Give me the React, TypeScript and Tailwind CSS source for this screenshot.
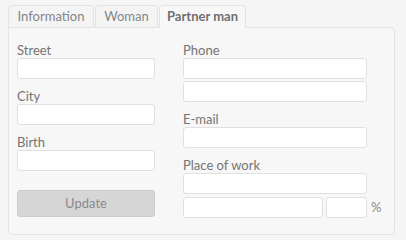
import React from "react";

const inputCls =
  "block h-[21px] w-full rounded-[3px] border border-[#e0e0e0] bg-white";

function Field({ label, className = "" }: { label: string; className?: string }) {
  return (
    <div className={className}>
      <div className="h-[16px] text-[13px] leading-[16px] text-[#747474]">{label}</div>
      <div className={inputCls} />
    </div>
  );
}

export default function App() {
  return (
    <div
      className="h-[240px] w-[406px] bg-[#f5f5f5] pl-[8px] pt-[5px]"
      style={{ fontFamily: "Lato, 'Open Sans', sans-serif" }}
    >
      <div className="flex h-[22px] gap-[1px]">
        <div className="flex w-[86px] items-center justify-center rounded-t-[4px] border border-b-0 border-[#e3e3e3] bg-[#f4f4f4] text-[13px] text-[#858585]">
          Information
        </div>
        <div className="flex w-[63px] items-center justify-center rounded-t-[4px] border border-b-0 border-[#e3e3e3] bg-[#f4f4f4] text-[13px] text-[#858585]">
          Woman
        </div>
        <div className="relative z-10 flex h-[23px] w-[87px] items-center justify-center rounded-t-[4px] border border-b-0 border-[#e3e3e3] bg-[#f7f7f7] text-[13px] font-bold text-[#707070]">
          Partner man
        </div>
      </div>
      <div className="flex h-[208px] w-[387px] gap-[28px] rounded-b-[4px] rounded-tr-[4px] border border-[#e3e3e3] bg-[#f7f7f7] pl-[8px] pt-[14px]">
        <div className="flex w-[138px] flex-col">
          <Field label="Street" className="mb-[9px]" />
          <Field label="City" className="mb-[9px]" />
          <Field label="Birth" />
          <div className="mt-[19px] flex h-[27px] items-center justify-center rounded-[3px] border border-[#cdcdcd] bg-[#d6d6d6] text-[13px] text-[#8a8a8a]">
            Update
          </div>
        </div>
        <div className="flex w-[184px] flex-col">
          <Field label="Phone" />
          <div className={inputCls + " mt-[2px]"} />
          <Field label="E-mail" className="mt-[9px]" />
          <Field label="Place of work" className="mt-[9px]" />
          <div className="mt-[3px] flex items-center gap-[3px]">
            <div className="h-[21px] w-[140px] shrink-0 rounded-[3px] border border-[#e0e0e0] bg-white" />
            <div className="h-[21px] w-[41px] shrink-0 rounded-[3px] border border-[#e0e0e0] bg-white" />
            <span className="ml-[1px] shrink-0 text-[13px] text-[#8a8a8a]">%</span>
          </div>
        </div>
      </div>
    </div>
  );
}
